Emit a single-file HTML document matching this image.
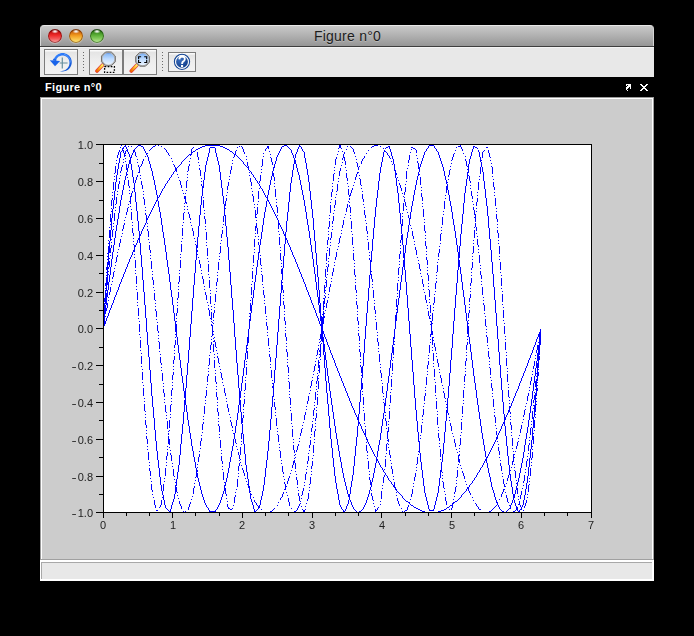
<!DOCTYPE html>
<html><head><meta charset="utf-8">
<style>
*{margin:0;padding:0;box-sizing:border-box}
html,body{width:694px;height:636px;background:#000;overflow:hidden;font-family:"Liberation Sans",sans-serif}
.abs{position:absolute}
#title{left:40px;top:25px;width:614px;height:21px;border-radius:4px 4px 0 0;
 background:linear-gradient(#c9c9c9,#969696);border-top:1px solid #e8e8e8;border-left:1px solid #d4d4d4;border-right:1px solid #d4d4d4}
#title .t{position:absolute;left:1px;right:0;top:2px;text-align:center;font-size:14px;letter-spacing:0.25px;color:#1c1c1c;text-shadow:0 1px 0 rgba(255,255,255,0.25)}
.dot{position:absolute;top:3px;width:14px;height:14px;border-radius:50%}
#tline{left:40px;top:46px;width:614px;height:1px;background:#3e3e3e}
#tool{left:40px;top:47px;width:614px;height:30px;background:#e8e8e8;border-top:1px solid #f4f4f4}
.btn{position:absolute;border:1px solid #7c7c7c;background:linear-gradient(#fafafa 0,#fafafa 1px,#e4e4e4 2px,#eeeeee 45%,#f3f3f3 100%)}
.sep{position:absolute;width:1px}
.sep i{position:absolute;left:0;width:1px;height:1px;background:#6a6a6a}
#dock{left:40px;top:77px;width:614px;height:20px;background:#000}
#dock .t{position:absolute;left:5px;top:4px;font-size:11px;font-weight:bold;letter-spacing:0.3px;color:#fff}
#panel{left:40px;top:97px;width:614px;height:463px;background:#cccccc;border-top:1px solid #9a9a9a;border-left:1px solid #9a9a9a;border-right:1px solid #a0a0a0;border-bottom:1px solid #a0a0a0}
#panel .in{position:absolute;left:0;top:0;right:0;bottom:0;border-top:1px solid #fff;border-left:1px solid #fff;border-right:1px solid #fff}
#sb{left:40px;top:560px;width:614px;height:21px;background:#e8e8e8;border-top:2px solid #fff;border-left:1px solid #fff;border-right:2px solid #fff;border-bottom:2px solid #fff}
#sb .in{position:absolute;left:0;top:0;right:0;bottom:0;border-top:1px solid #a8a8a8;border-left:1px solid #a8a8a8}
.yl{will-change:transform;position:absolute;left:60px;width:33px;text-align:right;font-size:11px;color:#222;line-height:13px}
.mn{display:inline-block;transform:scaleX(1.4);transform-origin:right;margin-right:1px}
.xl{will-change:transform;position:absolute;top:519px;width:20px;text-align:center;font-size:11px;color:#222;line-height:13px}
svg{position:absolute;left:0;top:0}
</style></head><body>
<div id="title" class="abs"><div class="t">Figure n°0</div>
 <div class="dot" style="left:7px;background:radial-gradient(3.5px 2.2px at 50% 17%,#fff 0,rgba(255,255,255,.7) 40%,rgba(255,255,255,0) 100%),linear-gradient(#7a0606 0,#c81414 22%,#ee2a2a 45%,#f25a5a 70%,#ffb0b0 100%);box-shadow:inset 0 0 0 1px rgba(90,0,0,.6),0 1px 1px rgba(255,255,255,.3)"></div>
 <div class="dot" style="left:28px;background:radial-gradient(3.5px 2.2px at 50% 17%,#fff 0,rgba(255,255,255,.7) 40%,rgba(255,255,255,0) 100%),linear-gradient(#7a3000 0,#d06a10 22%,#f0981e 45%,#f8c048 70%,#fff080 100%);box-shadow:inset 0 0 0 1px rgba(100,40,0,.6),0 1px 1px rgba(255,255,255,.3)"></div>
 <div class="dot" style="left:49px;background:radial-gradient(3.5px 2.2px at 50% 17%,#fff 0,rgba(255,255,255,.7) 40%,rgba(255,255,255,0) 100%),linear-gradient(#143c0a 0,#3a8a1e 22%,#5cb038 45%,#88cc60 70%,#c4f0a0 100%);box-shadow:inset 0 0 0 1px rgba(20,60,10,.6),0 1px 1px rgba(255,255,255,.3)"></div>
</div>
<div id="tline" class="abs"></div>
<div id="tool" class="abs">
 <div class="btn" style="left:4px;top:1px;width:34px;height:26px"></div>
 <div class="sep" style="left:43px;top:4px;height:20px"><i style="top:0"></i><i style="top:3px"></i><i style="top:6px"></i><i style="top:9px"></i><i style="top:12px"></i><i style="top:15px"></i><i style="top:18px"></i></div>
 <div class="btn" style="left:49px;top:1px;width:34px;height:26px"></div>
 <div class="btn" style="left:83px;top:1px;width:34px;height:26px"></div>
 <div class="sep" style="left:122px;top:4px;height:20px"><i style="top:0"></i><i style="top:3px"></i><i style="top:6px"></i><i style="top:9px"></i><i style="top:12px"></i><i style="top:15px"></i><i style="top:18px"></i></div>
 <div class="btn" style="left:128px;top:4px;width:28px;height:20px"></div>
</div>
<div id="dock" class="abs"><div class="t">Figure n°0</div></div>
<div id="panel" class="abs"><div class="in"></div></div>
<div id="sb" class="abs"><div class="in"></div></div>
<svg width="694" height="636" viewBox="0 0 694 636">
 <defs>
  <linearGradient id="lens" x1="0" y1="0" x2="0" y2="1"><stop offset="0" stop-color="#3c74e0"/><stop offset=".15" stop-color="#8cbcf8"/><stop offset=".5" stop-color="#c0dcff"/><stop offset="1" stop-color="#eef6ff"/></linearGradient>
  <linearGradient id="handle" x1="1" y1="0" x2="0" y2="1"><stop offset="0" stop-color="#fff060"/><stop offset=".5" stop-color="#ffb020"/><stop offset="1" stop-color="#f06800"/></linearGradient>
  <linearGradient id="arc" x1="0" y1="0" x2="1" y2="1"><stop offset="0" stop-color="#3a88ff"/><stop offset=".6" stop-color="#1a66ee"/><stop offset="1" stop-color="#1450c0"/></linearGradient>
  <radialGradient id="help" cx=".35" cy=".3" r=".8"><stop offset="0" stop-color="#3a6fc0"/><stop offset="1" stop-color="#0e3a88"/></radialGradient>
 </defs>
 <!-- rotate icon -->
 <path d="M53.66 59.87 L54.01 58.83 L54.48 57.84 L55.06 56.91 L55.75 56.06 L56.53 55.29 L57.40 54.63 L58.34 54.07 L59.34 53.63 L60.39 53.31 L61.47 53.11 L62.56 53.05 L63.66 53.12 L64.73 53.31 L65.78 53.64 L66.78 54.08 L67.72 54.64 L68.59 55.31 L69.37 56.08 L70.06 56.93 L70.64 57.86 L71.10 58.85 L71.44 59.89 L71.66 60.97 L71.75 62.06 L71.71 63.15 L71.53 64.23 L71.23 65.29 L70.81 66.30 L70.27 67.25 L69.62 68.13 L68.87 68.93 L68.04 69.64 L67.12 70.24 L66.14 70.72 L65.11 71.09 L64.04 71.33 L62.95 71.44 L61.85 71.42 L60.77 71.28 L59.71 71.00 L59.74 70.90 L60.82 70.99 L61.89 70.95 L62.92 70.79 L63.90 70.52 L64.83 70.14 L65.69 69.66 L66.47 69.11 L67.17 68.47 L67.78 67.78 L68.30 67.03 L68.73 66.25 L69.05 65.44 L69.29 64.61 L69.43 63.77 L69.47 62.93 L69.43 62.11 L69.31 61.30 L69.12 60.51 L68.87 59.74 L68.53 59.01 L68.10 58.32 L67.59 57.69 L67.01 57.12 L66.37 56.63 L65.68 56.21 L64.94 55.88 L64.16 55.64 L63.37 55.50 L62.56 55.45 L61.75 55.50 L60.95 55.64 L60.18 55.88 L59.44 56.20 L58.74 56.62 L58.10 57.11 L57.52 57.67 L57.01 58.30 L56.58 58.99 L56.24 59.72 L55.98 60.49Z" fill="url(#arc)"/>
 <path d="M64 54.4 A7.9 7.9 0 0 1 70.4 62.5" fill="none" stroke="#8cc4ff" stroke-width="0.7" opacity=".7"/>
 <path d="M49.8 60.2 L60.2 61.1 L55 66.2 Z" fill="#1a64ea"/>
 <path d="M52.4 60.4 L53.8 58.4 L56.5 59.8 L56.2 61 Z" fill="#1a64ea"/>
 <path d="M62.3 57.5v11M59.7 63h7.9" stroke="#4f7f8f" stroke-width="1.2" fill="none" opacity=".85"/>
 <!-- zoom icon 1 -->
 <path d="M102.4 65.2 L97 71" stroke="#e01818" stroke-width="3.6" stroke-linecap="round" opacity=".85"/>
 <path d="M102.4 65.2 L97 71" stroke="url(#handle)" stroke-width="2.4" stroke-linecap="round"/>
 <circle cx="108.4" cy="58.9" r="6.6" fill="url(#lens)" stroke="#b4b4b4" stroke-width="1.4"/>
 <path d="M115.33 61.77 L111.27 65.83 L105.53 65.83 L101.47 61.77 L101.47 56.03 L105.53 51.97 L111.27 51.97 L115.33 56.03Z" fill="none" stroke="#5a5a5a" stroke-width="0.8"/>
 <rect x="104.6" y="66.6" width="9.8" height="5.7" fill="none" stroke="#000" stroke-width="1.3" stroke-dasharray="1.6 1.5"/>
 <!-- zoom icon 2 -->
 <path d="M136.7 65.2 L131.3 71" stroke="#e01818" stroke-width="3.6" stroke-linecap="round" opacity=".85"/>
 <path d="M136.7 65.2 L131.3 71" stroke="url(#handle)" stroke-width="2.4" stroke-linecap="round"/>
 <circle cx="142.6" cy="59.3" r="6.6" fill="url(#lens)" stroke="#b4b4b4" stroke-width="1.4"/>
 <path d="M149.53 62.17 L145.47 66.23 L139.73 66.23 L135.67 62.17 L135.67 56.43 L139.73 52.37 L145.47 52.37 L149.53 56.43Z" fill="none" stroke="#5a5a5a" stroke-width="0.8"/>
 <path d="M138.6 59.2v-2.5h2.5M144.2 56.7h2.5v2.5M146.7 60v2.5h-2.5M141.1 62.5h-2.5V60" fill="none" stroke="#000" stroke-width="1.15"/>
 <!-- help icon -->
 <circle cx="182" cy="61.8" r="7.5" fill="none" stroke="#1a4a98" stroke-width="1.3"/>
 <circle cx="182" cy="61.8" r="6.5" fill="none" stroke="#fff" stroke-width="0.9"/>
 <circle cx="182" cy="61.8" r="5.9" fill="url(#help)"/>
 <path d="M179.3 59.4 Q179.4 56.5 182.1 56.5 Q184.9 56.6 184.8 59.2 Q184.7 60.7 183 61.6 Q182.1 62.2 182.1 64" fill="none" stroke="#fff" stroke-width="1.9"/>
 <rect x="181" y="65" width="2.1" height="2.1" fill="#fff"/>
 <!-- dock icons -->
 <path d="M626 84h5v1h-5zM626 85h1v1h-1zM628 85h3v1h-3zM627 86h4v1h-4zM626 87h3v1h-3zM630 87h1v1h-1zM626 88h2v1h-2zM630 88h1v1h-1zM626 89h1v1h-1zM627 90h1v1h-1zM640 84h2v1h-2zM646 84h2v1h-2zM641 85h2v1h-2zM645 85h2v1h-2zM642 86h4v1h-4zM643 87h2v1h-2zM642 88h4v1h-4zM641 89h2v1h-2zM645 89h2v1h-2zM640 90h2v1h-2zM646 90h2v1h-2z" fill="#fff" shape-rendering="crispEdges"/>
 <rect x="103" y="144" width="489" height="369" fill="#fff"/>
 <g fill="none" stroke="#0000ff" stroke-width="1" shape-rendering="crispEdges">
<path d="M103.5 313v16M104.5 298v4M104.5 303v23M105.5 283v3M105.5 288v1M105.5 290v14M105.5 305v9M105.5 316v1M105.5 321v3M106.5 267v3M106.5 272v1M106.5 275v1M106.5 277v14M106.5 293v12M106.5 308v3M106.5 318v3M107.5 253v1M107.5 256v1M107.5 259v1M107.5 262v23M107.5 290v7M107.5 303v5M107.5 316v2M108.5 240v1M108.5 243v1M108.5 246v19M108.5 267v2M108.5 271v1M108.5 274v1M108.5 282v8M108.5 297v1M108.5 300v1M108.5 313v3M109.5 227v1M109.5 230v8M109.5 241v12M109.5 258v1M109.5 261v6M109.5 275v7M109.5 292v3M109.5 310v3M110.5 214v8M110.5 224v1M110.5 230v11M110.5 248v5M110.5 255v1M110.5 267v8M110.5 287v5M110.5 308v2M111.5 200v6M111.5 208v1M111.5 211v1M111.5 218v12M111.5 239v1M111.5 242v1M111.5 245v3M111.5 259v8M111.5 284v1M111.5 305v3M112.5 192v1M112.5 195v1M112.5 198v2M112.5 209v9M112.5 230v7M112.5 252v7M112.5 277v2M112.5 281v1M112.5 303v2M113.5 182v8M113.5 200v9M113.5 223v1M113.5 226v1M113.5 229v1M113.5 245v7M113.5 272v5M113.5 300v3M114.5 173v1M114.5 176v1M114.5 179v1M114.5 191v9M114.5 213v8M114.5 238v7M114.5 268v1M114.5 271v1M114.5 297v3M115.5 166v7M115.5 182v9M115.5 204v1M115.5 207v1M115.5 210v1M115.5 231v7M115.5 262v1M115.5 265v1M115.5 295v2M116.5 160v1M116.5 163v1M116.5 175v7M116.5 197v7M116.5 225v6M116.5 257v5M116.5 292v3M117.5 155v3M117.5 169v6M117.5 191v1M117.5 194v1M117.5 219v6M117.5 252v1M117.5 255v2M117.5 290v2M118.5 152v3M118.5 163v6M118.5 184v5M118.5 213v6M118.5 249v1M118.5 287v3M119.5 150v2M119.5 158v5M119.5 178v1M119.5 181v3M119.5 206v7M119.5 243v4M119.5 284v3M120.5 147v1M120.5 152v6M120.5 171v2M120.5 175v1M120.5 200v6M120.5 239v4M120.5 282v2M121.5 145v1M121.5 151v1M121.5 167v4M121.5 195v5M121.5 236v1M121.5 279v3M122.5 148v3M122.5 165v2M122.5 190v5M122.5 229v2M122.5 233v1M122.5 277v2M123.5 147v2M123.5 150v3M123.5 159v1M123.5 162v1M123.5 185v5M123.5 225v4M123.5 274v3M124.5 146v1M124.5 153v4M124.5 180v5M124.5 220v1M124.5 223v2M124.5 272v2M125.5 145v2M125.5 151v3M125.5 155v1M125.5 158v1M125.5 161v1M125.5 176v4M125.5 217v1M125.5 269v3M126.5 147v2M126.5 150v1M126.5 164v6M126.5 172v4M126.5 212v3M126.5 267v2M127.5 149v3M127.5 168v4M127.5 174v1M127.5 177v1M127.5 208v4M127.5 264v3M128.5 146v1M128.5 152v2M128.5 164v4M128.5 180v6M128.5 204v1M128.5 207v1M128.5 262v2M129.5 154v3M129.5 160v4M129.5 186v2M129.5 190v1M129.5 193v1M129.5 201v1M129.5 259v3M130.5 157v7M130.5 196v8M130.5 206v1M130.5 257v2M131.5 146v1M131.5 155v3M131.5 164v6M131.5 193v4M131.5 209v1M131.5 212v8M131.5 255v2M132.5 153v2M132.5 170v7M132.5 191v2M132.5 222v1M132.5 225v1M132.5 228v5M132.5 252v3M133.5 150v3M133.5 177v6M133.5 188v1M133.5 233v3M133.5 238v1M133.5 241v1M133.5 244v1M133.5 250v2M134.5 149v3M134.5 183v9M134.5 245v7M134.5 254v1M134.5 257v1M135.5 148v1M135.5 152v4M135.5 180v3M135.5 192v10M135.5 245v2M135.5 260v8M135.5 270v1M135.5 273v1M136.5 147v1M136.5 156v1M136.5 177v3M136.5 202v9M136.5 243v2M136.5 276v8M136.5 286v1M136.5 289v1M137.5 146v1M137.5 159v1M137.5 162v1M137.5 175v2M137.5 211v10M137.5 240v3M137.5 292v8M137.5 302v1M137.5 305v1M138.5 145v1M138.5 165v2M138.5 172v1M138.5 221v10M138.5 238v2M138.5 308v8M138.5 318v1M139.5 145v1M139.5 167v6M139.5 231v12M139.5 321v1M139.5 324v8M139.5 334v1M140.5 145v1M140.5 166v1M140.5 175v1M140.5 178v1M140.5 234v2M140.5 243v12M140.5 337v1M140.5 340v8M140.5 350v1M141.5 146v1M141.5 164v2M141.5 181v4M141.5 231v3M141.5 255v12M141.5 353v1M141.5 356v8M141.5 366v1M142.5 146v1M142.5 161v3M142.5 185v4M142.5 229v2M142.5 267v13M142.5 369v1M142.5 372v8M142.5 382v1M143.5 147v2M143.5 159v2M143.5 191v1M143.5 194v1M143.5 197v2M143.5 227v2M143.5 280v12M143.5 385v1M143.5 388v8M144.5 149v2M144.5 199v6M144.5 225v2M144.5 292v13M144.5 398v1M144.5 401v1M144.5 404v7M145.5 151v2M145.5 156v1M145.5 207v1M145.5 210v1M145.5 213v2M145.5 223v2M145.5 305v13M145.5 411v1M145.5 414v1M145.5 417v1M145.5 420v5M146.5 153v2M146.5 215v8M146.5 318v14M146.5 425v3M146.5 430v1M146.5 433v1M146.5 436v3M147.5 153v1M147.5 155v2M147.5 218v2M147.5 223v1M147.5 226v1M147.5 229v2M147.5 332v13M147.5 439v5M147.5 446v1M147.5 449v1M148.5 157v4M148.5 216v2M148.5 231v6M148.5 239v1M148.5 345v12M148.5 452v8M149.5 150v1M149.5 161v3M149.5 214v2M149.5 242v1M149.5 245v5M149.5 357v13M149.5 462v1M149.5 465v1M149.5 468v3M150.5 149v1M150.5 164v4M150.5 212v2M150.5 250v3M150.5 255v1M150.5 258v1M150.5 370v13M150.5 471v5M150.5 478v1M151.5 148v1M151.5 168v3M151.5 210v2M151.5 261v8M151.5 383v13M151.5 481v1M151.5 484v6M152.5 147v1M152.5 171v5M152.5 208v2M152.5 271v1M152.5 274v1M152.5 277v3M152.5 396v11M152.5 490v2M152.5 494v1M153.5 146v1M153.5 176v4M153.5 206v2M153.5 280v5M153.5 287v1M153.5 407v11M153.5 497v1M154.5 146v1M154.5 180v5M154.5 204v2M154.5 290v1M154.5 293v7M154.5 418v12M154.5 500v5M155.5 145v1M155.5 185v5M155.5 202v2M155.5 300v1M155.5 303v1M155.5 306v1M155.5 309v2M155.5 430v11M155.5 505v3M156.5 190v5M156.5 200v2M156.5 311v6M156.5 319v1M156.5 441v10M156.5 510v1M157.5 195v6M157.5 322v1M157.5 325v6M157.5 451v9M157.5 510v1M158.5 145v1M158.5 197v1M158.5 201v6M158.5 331v2M158.5 335v1M158.5 338v1M158.5 341v1M158.5 460v8M159.5 195v2M159.5 207v5M159.5 342v7M159.5 351v1M159.5 468v9M159.5 507v1M160.5 193v2M160.5 212v6M160.5 354v1M160.5 357v6M160.5 477v8M160.5 505v2M161.5 146v1M161.5 191v2M161.5 218v7M161.5 363v2M161.5 367v1M161.5 370v1M161.5 485v6M161.5 500v5M162.5 189v2M162.5 225v7M162.5 373v8M162.5 491v4M162.5 497v1M163.5 188v1M163.5 232v6M163.5 383v1M163.5 386v1M163.5 389v4M163.5 484v7M163.5 495v5M164.5 148v1M164.5 186v2M164.5 238v7M164.5 393v4M164.5 399v1M164.5 402v1M164.5 478v1M164.5 481v1M164.5 500v5M165.5 149v1M165.5 184v2M165.5 245v7M165.5 405v7M165.5 468v8M165.5 505v3M166.5 150v2M166.5 183v1M166.5 252v8M166.5 412v1M166.5 415v1M166.5 418v1M166.5 456v4M166.5 462v1M166.5 465v1M166.5 508v1M167.5 152v1M167.5 181v2M167.5 260v7M167.5 421v8M167.5 446v1M167.5 449v1M167.5 452v4M167.5 509v1M168.5 153v2M168.5 180v1M168.5 267v7M168.5 431v1M168.5 433v2M168.5 436v8M168.5 510v1M169.5 155v1M169.5 178v2M169.5 274v8M169.5 420v8M169.5 430v1M169.5 439v6M169.5 447v1M169.5 511v1M170.5 177v1M170.5 282v8M170.5 405v7M170.5 414v1M170.5 417v1M170.5 450v1M170.5 453v2M170.5 509v3M171.5 158v1M171.5 175v2M171.5 290v7M171.5 390v6M171.5 398v1M171.5 401v1M171.5 404v1M171.5 455v6M171.5 505v4M172.5 161v1M172.5 174v1M172.5 297v8M172.5 375v5M172.5 382v1M172.5 385v1M172.5 388v2M172.5 463v1M172.5 466v1M172.5 502v3M173.5 164v1M173.5 172v2M173.5 305v8M173.5 360v4M173.5 366v1M173.5 369v1M173.5 372v3M173.5 469v7M173.5 499v3M174.5 165v2M174.5 171v1M174.5 313v8M174.5 345v3M174.5 350v1M174.5 353v1M174.5 356v4M174.5 476v1M174.5 479v1M174.5 494v5M175.5 167v4M175.5 321v11M175.5 334v1M175.5 337v1M175.5 340v5M175.5 482v1M175.5 485v9M176.5 168v4M176.5 313v3M176.5 318v1M176.5 321v1M176.5 324v13M176.5 479v7M176.5 487v5M177.5 167v1M177.5 174v1M177.5 298v2M177.5 302v1M177.5 305v1M177.5 308v5M177.5 337v8M177.5 472v7M177.5 492v1M177.5 495v1M178.5 166v1M178.5 177v1M178.5 282v2M178.5 286v1M178.5 289v1M178.5 292v6M178.5 345v8M178.5 465v7M178.5 498v1M179.5 165v1M179.5 180v1M179.5 270v1M179.5 273v1M179.5 276v6M179.5 353v7M179.5 455v10M179.5 501v3M180.5 164v1M180.5 181v4M180.5 254v1M180.5 257v1M180.5 260v8M180.5 360v8M180.5 444v11M180.5 504v2M181.5 162v2M181.5 185v3M181.5 241v1M181.5 244v8M181.5 368v8M181.5 434v10M181.5 506v3M182.5 161v1M182.5 190v1M182.5 225v1M182.5 228v8M182.5 238v1M182.5 376v7M182.5 424v10M183.5 160v1M183.5 193v1M183.5 213v7M183.5 222v1M183.5 383v8M183.5 412v12M183.5 511v1M184.5 159v1M184.5 196v3M184.5 203v1M184.5 206v1M184.5 209v1M184.5 212v1M184.5 391v7M184.5 400v12M185.5 158v1M185.5 193v1M185.5 196v7M185.5 388v17M185.5 511v1M186.5 157v1M186.5 181v7M186.5 190v1M186.5 202v2M186.5 375v13M186.5 405v7M187.5 156v1M187.5 171v1M187.5 174v1M187.5 177v1M187.5 180v1M187.5 206v1M187.5 209v1M187.5 363v12M187.5 412v8M188.5 155v1M188.5 166v5M188.5 212v2M188.5 350v13M188.5 420v6M188.5 507v3M189.5 154v1M189.5 161v1M189.5 164v2M189.5 214v4M189.5 337v13M189.5 426v7M189.5 504v3M190.5 154v2M190.5 158v1M190.5 218v2M190.5 222v1M190.5 324v13M190.5 433v6M190.5 502v2M191.5 149v6M191.5 225v1M191.5 311v13M191.5 439v7M191.5 499v1M192.5 148v1M192.5 152v1M192.5 228v3M192.5 298v13M192.5 446v5M192.5 496v1M193.5 147v1M193.5 151v1M193.5 231v5M193.5 285v13M193.5 451v6M193.5 488v6M194.5 151v1M194.5 238v1M194.5 273v12M194.5 457v5M194.5 483v1M194.5 486v2M195.5 150v1M195.5 241v1M195.5 244v1M195.5 260v13M195.5 462v6M195.5 477v1M195.5 480v1M196.5 149v1M196.5 245v15M196.5 468v9M197.5 149v1M197.5 152v5M197.5 237v11M197.5 250v2M197.5 254v1M197.5 464v1M197.5 467v1M197.5 470v2M197.5 473v5M198.5 148v1M198.5 157v3M198.5 162v1M198.5 226v11M198.5 257v1M198.5 457v5M198.5 478v4M199.5 148v1M199.5 165v1M199.5 168v2M199.5 215v11M199.5 260v4M199.5 451v1M199.5 454v3M199.5 482v4M200.5 147v1M200.5 170v6M200.5 205v10M200.5 264v4M200.5 441v5M200.5 448v1M200.5 486v4M201.5 147v1M201.5 178v1M201.5 181v1M201.5 184v2M201.5 196v9M201.5 270v1M201.5 273v1M201.5 435v1M201.5 438v3M201.5 490v4M202.5 146v1M202.5 186v10M202.5 276v3M202.5 424v6M202.5 432v1M202.5 494v3M203.5 146v1M203.5 180v8M203.5 197v1M203.5 200v8M203.5 279v5M203.5 416v1M203.5 419v1M203.5 422v2M203.5 497v3M204.5 146v1M204.5 172v8M204.5 210v1M204.5 213v1M204.5 216v3M204.5 286v1M204.5 289v1M204.5 406v8M204.5 500v3M205.5 145v1M205.5 165v7M205.5 219v5M205.5 226v1M205.5 229v1M205.5 292v3M205.5 396v2M205.5 400v1M205.5 403v1M205.5 503v2M206.5 145v1M206.5 161v4M206.5 232v8M206.5 242v1M206.5 245v1M206.5 295v5M206.5 387v1M206.5 390v6M206.5 505v2M207.5 145v1M207.5 157v4M207.5 248v8M207.5 258v1M207.5 302v1M207.5 376v6M207.5 384v1M207.5 507v1M208.5 145v1M208.5 153v4M208.5 261v1M208.5 264v8M208.5 274v1M208.5 305v1M208.5 308v2M208.5 365v1M208.5 368v1M208.5 371v1M208.5 374v2M208.5 508v2M209.5 145v1M209.5 148v5M209.5 277v1M209.5 280v8M209.5 310v6M209.5 355v1M209.5 358v7M209.5 510v2M210.5 145v1M210.5 147v1M210.5 290v1M210.5 293v1M210.5 296v8M210.5 318v1M210.5 345v5M210.5 352v1M210.5 511v1M211.5 145v1M211.5 147v1M211.5 306v1M211.5 309v1M211.5 312v8M211.5 321v1M211.5 324v2M211.5 336v1M211.5 339v1M211.5 342v3M211.5 511v1M212.5 145v1M212.5 147v1M212.5 322v1M212.5 325v11M212.5 511v1M213.5 145v1M213.5 147v1M213.5 313v5M213.5 320v1M213.5 323v1M213.5 331v1M213.5 334v1M213.5 338v1M213.5 341v1M213.5 344v8M213.5 511v1M214.5 145v1M214.5 147v1M214.5 304v1M214.5 307v1M214.5 310v3M214.5 337v1M214.5 340v2M214.5 354v1M214.5 357v1M214.5 360v8M214.5 511v1M215.5 145v1M215.5 148v5M215.5 294v8M215.5 342v5M215.5 370v1M215.5 373v1M215.5 376v6M215.5 510v2M216.5 145v1M216.5 153v4M216.5 282v4M216.5 288v1M216.5 291v1M216.5 347v1M216.5 350v1M216.5 382v2M216.5 386v1M216.5 389v1M216.5 392v5M216.5 509v1M217.5 145v1M217.5 157v4M217.5 272v1M217.5 275v1M217.5 278v4M217.5 353v1M217.5 356v2M217.5 397v3M217.5 402v1M217.5 405v1M217.5 408v4M217.5 507v2M218.5 145v1M218.5 161v4M218.5 262v8M218.5 358v5M218.5 412v4M218.5 418v1M218.5 421v1M218.5 424v2M218.5 505v2M219.5 145v1M219.5 165v7M219.5 253v1M219.5 256v1M219.5 259v1M219.5 363v1M219.5 366v1M219.5 426v6M219.5 434v1M219.5 437v1M219.5 503v2M220.5 146v1M220.5 172v8M220.5 243v1M220.5 246v7M220.5 369v1M220.5 372v1M220.5 440v8M220.5 500v3M221.5 146v1M221.5 180v8M221.5 234v4M221.5 240v1M221.5 373v5M221.5 450v1M221.5 453v1M221.5 456v5M221.5 497v3M222.5 146v1M222.5 188v8M222.5 227v1M222.5 230v4M222.5 378v2M222.5 382v1M222.5 461v3M222.5 466v1M222.5 469v1M222.5 494v3M223.5 147v1M223.5 196v8M223.5 216v6M223.5 224v1M223.5 385v1M223.5 472v8M223.5 491v3M224.5 147v1M224.5 204v12M224.5 388v5M224.5 482v1M224.5 485v6M225.5 148v1M225.5 201v5M225.5 208v1M225.5 215v11M225.5 393v3M225.5 482v4M225.5 488v6M226.5 148v1M226.5 195v1M226.5 198v3M226.5 226v11M226.5 398v1M226.5 401v1M226.5 478v4M226.5 494v2M226.5 498v1M227.5 149v1M227.5 186v4M227.5 192v1M227.5 237v10M227.5 404v4M227.5 473v5M227.5 501v1M227.5 504v3M228.5 149v1M228.5 182v4M228.5 247v13M228.5 408v4M228.5 468v5M228.5 507v2M229.5 150v1M229.5 176v1M229.5 179v1M229.5 260v12M229.5 414v1M229.5 462v6M229.5 508v1M230.5 151v1M230.5 170v4M230.5 272v13M230.5 417v1M230.5 420v2M230.5 457v5M230.5 509v1M231.5 151v1M231.5 166v4M231.5 285v13M231.5 422v4M231.5 451v6M231.5 509v1M232.5 152v1M232.5 160v1M232.5 163v1M232.5 298v12M232.5 426v2M232.5 430v1M232.5 446v5M232.5 508v1M233.5 153v1M233.5 157v1M233.5 310v13M233.5 433v1M233.5 439v7M233.5 505v1M234.5 154v3M234.5 323v14M234.5 433v6M234.5 497v6M235.5 151v4M235.5 337v13M235.5 426v7M235.5 439v4M235.5 492v1M235.5 495v2M236.5 150v1M236.5 155v1M236.5 350v13M236.5 420v6M236.5 443v1M236.5 446v1M236.5 489v1M237.5 147v1M237.5 156v1M237.5 363v12M237.5 413v7M237.5 449v1M237.5 479v8M238.5 157v1M238.5 375v13M238.5 405v8M238.5 452v3M238.5 466v5M238.5 473v1M238.5 476v1M239.5 146v1M239.5 158v1M239.5 388v17M239.5 455v4M239.5 460v1M239.5 463v3M240.5 159v1M240.5 391v7M240.5 400v12M240.5 447v8M240.5 459v1M240.5 462v1M241.5 146v1M241.5 160v1M241.5 383v8M241.5 412v12M241.5 433v6M241.5 441v1M241.5 444v1M241.5 465v1M242.5 147v2M242.5 161v1M242.5 376v7M242.5 418v5M242.5 424v10M242.5 468v2M243.5 149v3M243.5 162v2M243.5 368v8M243.5 404v3M243.5 409v1M243.5 412v1M243.5 415v3M243.5 434v10M243.5 470v3M244.5 152v2M244.5 164v1M244.5 360v8M244.5 390v1M244.5 393v1M244.5 396v1M244.5 399v5M244.5 444v10M244.5 473v3M245.5 165v1M245.5 353v7M245.5 377v1M245.5 380v1M245.5 383v7M245.5 454v11M245.5 478v1M246.5 156v1M246.5 159v1M246.5 166v1M246.5 345v8M246.5 361v1M246.5 364v1M246.5 367v8M246.5 465v7M246.5 481v1M247.5 162v4M247.5 167v1M247.5 337v9M247.5 348v1M247.5 351v8M247.5 472v7M247.5 484v1M248.5 166v4M248.5 329v14M248.5 479v9M249.5 170v1M249.5 172v1M249.5 175v1M249.5 313v1M249.5 316v1M249.5 319v10M249.5 486v7M250.5 171v1M250.5 178v4M250.5 300v1M250.5 303v8M250.5 313v8M250.5 491v1M250.5 493v6M251.5 172v2M251.5 182v4M251.5 188v1M251.5 284v1M251.5 287v8M251.5 297v1M251.5 305v8M251.5 494v1M251.5 499v3M252.5 174v1M252.5 191v1M252.5 194v2M252.5 268v1M252.5 271v8M252.5 281v1M252.5 298v7M252.5 502v3M253.5 175v2M253.5 196v6M253.5 255v8M253.5 265v1M253.5 290v8M253.5 497v1M253.5 505v4M254.5 177v1M254.5 204v1M254.5 207v1M254.5 239v8M254.5 249v1M254.5 252v1M254.5 282v8M254.5 500v2M254.5 509v3M255.5 178v2M255.5 210v8M255.5 226v5M255.5 233v1M255.5 236v1M255.5 275v7M255.5 502v1M255.5 511v1M256.5 180v1M256.5 214v1M256.5 217v1M256.5 220v1M256.5 223v5M256.5 267v8M256.5 503v2M256.5 510v1M257.5 181v2M257.5 204v1M257.5 207v7M257.5 228v6M257.5 260v7M257.5 505v1M257.5 509v1M258.5 183v1M258.5 191v8M258.5 201v1M258.5 236v1M258.5 239v1M258.5 242v3M258.5 252v8M258.5 506v3M259.5 181v2M259.5 184v2M259.5 188v1M259.5 245v8M259.5 505v3M260.5 175v6M260.5 186v2M260.5 239v6M260.5 255v1M260.5 258v7M260.5 500v5M261.5 166v1M261.5 169v1M261.5 172v1M261.5 188v1M261.5 232v7M261.5 265v1M261.5 268v1M261.5 271v1M261.5 274v1M261.5 496v4M261.5 509v1M262.5 159v7M262.5 189v2M262.5 225v7M262.5 275v7M262.5 284v1M262.5 491v5M263.5 153v1M263.5 156v1M263.5 191v2M263.5 218v7M263.5 287v1M263.5 290v5M263.5 485v6M264.5 193v2M264.5 212v6M264.5 295v3M264.5 300v1M264.5 303v1M264.5 477v8M264.5 512v1M265.5 149v2M265.5 195v2M265.5 207v5M265.5 306v8M265.5 468v9M266.5 148v1M266.5 197v1M266.5 201v6M266.5 316v1M266.5 319v1M266.5 322v4M266.5 460v8M267.5 146v2M267.5 195v6M267.5 326v4M267.5 332v1M267.5 335v1M267.5 451v9M267.5 512v1M268.5 146v3M268.5 190v5M268.5 200v2M268.5 338v8M268.5 441v10M268.5 512v1M269.5 151v1M269.5 185v5M269.5 202v2M269.5 348v1M269.5 351v1M269.5 354v3M269.5 430v11M269.5 512v1M270.5 154v1M270.5 157v1M270.5 180v5M270.5 204v2M270.5 357v5M270.5 364v1M270.5 367v1M270.5 419v11M270.5 511v1M271.5 158v4M271.5 176v4M271.5 206v2M271.5 370v8M271.5 407v12M271.5 511v1M272.5 162v3M272.5 171v5M272.5 208v2M272.5 380v1M272.5 383v1M272.5 386v2M272.5 396v11M272.5 510v1M273.5 167v4M273.5 173v4M273.5 210v2M273.5 383v14M273.5 509v1M274.5 164v4M274.5 177v4M274.5 183v1M274.5 186v1M274.5 212v2M274.5 370v13M274.5 399v1M274.5 402v5M274.5 508v1M275.5 161v3M275.5 189v8M275.5 214v2M275.5 358v12M275.5 407v3M275.5 412v1M275.5 415v1M276.5 157v4M276.5 199v1M276.5 202v1M276.5 205v2M276.5 216v2M276.5 345v13M276.5 418v8M277.5 155v2M277.5 207v6M277.5 215v1M277.5 218v2M277.5 332v13M277.5 428v1M277.5 431v1M277.5 434v1M277.5 505v1M278.5 153v2M278.5 220v9M278.5 231v1M278.5 319v13M278.5 435v7M278.5 502v1M279.5 151v2M279.5 223v2M279.5 234v1M279.5 237v8M279.5 306v13M279.5 444v1M279.5 447v1M279.5 450v1M280.5 149v2M280.5 225v2M280.5 247v1M280.5 250v1M280.5 253v7M280.5 293v13M280.5 451v7M280.5 498v2M281.5 147v2M281.5 227v2M281.5 260v1M281.5 263v1M281.5 266v1M281.5 269v5M281.5 280v13M281.5 460v1M281.5 463v1M281.5 497v1M282.5 146v1M282.5 229v2M282.5 268v12M282.5 282v1M282.5 285v5M282.5 466v6M282.5 494v3M283.5 146v1M283.5 231v3M283.5 256v12M283.5 290v3M283.5 295v1M283.5 298v1M283.5 301v4M283.5 472v2M283.5 476v1M283.5 492v2M284.5 145v1M284.5 234v2M284.5 244v12M284.5 305v4M284.5 311v1M284.5 314v1M284.5 317v4M284.5 479v1M284.5 482v2M284.5 489v1M285.5 145v1M285.5 232v12M285.5 321v4M285.5 327v1M285.5 330v1M285.5 333v4M285.5 484v6M286.5 145v1M286.5 221v11M286.5 238v2M286.5 337v4M286.5 343v1M286.5 346v1M286.5 349v3M286.5 486v1M286.5 492v1M287.5 146v1M287.5 212v9M287.5 240v3M287.5 352v5M287.5 359v1M287.5 362v1M287.5 365v2M287.5 481v3M287.5 495v1M288.5 147v1M288.5 202v10M288.5 243v2M288.5 367v6M288.5 375v1M288.5 378v1M288.5 381v1M288.5 478v3M288.5 498v4M289.5 148v1M289.5 192v10M289.5 245v2M289.5 382v7M289.5 391v1M289.5 394v1M289.5 397v1M289.5 476v2M289.5 502v4M290.5 149v1M290.5 183v9M290.5 247v3M290.5 398v7M290.5 407v1M290.5 410v1M290.5 473v1M291.5 150v3M291.5 177v6M291.5 250v2M291.5 413v8M291.5 423v1M291.5 470v1M291.5 508v1M292.5 153v2M292.5 170v7M292.5 252v3M292.5 426v1M292.5 429v8M292.5 465v3M293.5 155v3M293.5 164v6M293.5 255v2M293.5 439v1M293.5 442v1M293.5 445v5M293.5 461v4M294.5 158v6M294.5 257v2M294.5 450v3M294.5 455v1M294.5 458v1M294.5 460v3M294.5 511v1M295.5 154v4M295.5 160v4M295.5 259v3M295.5 454v1M295.5 457v1M295.5 463v6M295.5 471v1M295.5 511v1M296.5 152v2M296.5 164v4M296.5 262v2M296.5 450v2M296.5 474v1M296.5 477v3M296.5 510v1M297.5 149v3M297.5 168v4M297.5 264v3M297.5 446v4M297.5 480v5M297.5 487v1M297.5 508v2M298.5 147v2M298.5 172v3M298.5 267v2M298.5 444v2M298.5 490v1M298.5 493v3M298.5 506v2M299.5 145v2M299.5 175v5M299.5 269v3M299.5 438v1M299.5 441v1M299.5 496v5M299.5 504v2M300.5 146v1M300.5 180v5M300.5 272v2M300.5 433v3M300.5 501v1M300.5 503v1M301.5 147v2M301.5 185v5M301.5 274v3M301.5 429v4M301.5 495v1M301.5 498v1M301.5 506v1M302.5 149v2M302.5 190v5M302.5 277v2M302.5 425v1M302.5 428v1M302.5 491v4M302.5 509v1M303.5 151v1M303.5 195v5M303.5 279v3M303.5 422v1M303.5 488v3M303.5 510v2M304.5 152v6M304.5 200v6M304.5 282v2M304.5 415v5M304.5 482v1M304.5 485v1M304.5 510v3M305.5 158v5M305.5 206v6M305.5 284v3M305.5 412v3M305.5 474v6M305.5 506v1M305.5 509v1M306.5 163v6M306.5 212v7M306.5 287v3M306.5 406v1M306.5 409v1M306.5 469v1M306.5 472v2M306.5 503v1M307.5 169v6M307.5 219v6M307.5 290v2M307.5 401v3M307.5 461v3M307.5 466v1M307.5 499v2M308.5 175v7M308.5 225v6M308.5 292v3M308.5 396v5M308.5 453v1M308.5 456v5M308.5 493v6M309.5 182v9M309.5 231v7M309.5 295v2M309.5 393v1M309.5 445v3M309.5 450v1M309.5 484v1M309.5 487v1M309.5 490v1M310.5 191v9M310.5 238v7M310.5 297v3M310.5 386v2M310.5 390v1M310.5 437v1M310.5 440v5M310.5 477v7M311.5 200v9M311.5 245v7M311.5 300v3M311.5 381v5M311.5 428v4M311.5 434v1M311.5 466v3M311.5 471v1M311.5 474v1M312.5 209v9M312.5 252v7M312.5 303v2M312.5 377v1M312.5 380v1M312.5 421v1M312.5 424v4M312.5 458v1M312.5 461v5M313.5 218v12M313.5 259v8M313.5 305v3M313.5 371v1M313.5 374v1M313.5 410v6M313.5 418v1M313.5 445v8M313.5 455v1M314.5 230v11M314.5 267v7M314.5 308v2M314.5 366v5M314.5 402v1M314.5 405v1M314.5 408v2M314.5 431v6M314.5 439v1M314.5 442v1M315.5 241v12M315.5 274v8M315.5 310v3M315.5 361v1M315.5 364v2M315.5 392v8M315.5 418v3M315.5 423v1M315.5 426v1M315.5 429v2M316.5 253v12M316.5 282v8M316.5 313v3M316.5 355v1M316.5 358v1M316.5 381v3M316.5 386v1M316.5 389v1M316.5 407v1M316.5 410v1M316.5 413v5M317.5 265v12M317.5 290v7M317.5 316v2M317.5 350v5M317.5 373v1M317.5 376v5M317.5 391v1M317.5 394v1M317.5 397v8M318.5 277v13M318.5 297v8M318.5 318v3M318.5 345v1M318.5 348v2M318.5 360v8M318.5 370v1M318.5 375v1M318.5 378v1M318.5 381v8M319.5 290v13M319.5 305v8M319.5 321v3M319.5 339v1M319.5 342v1M319.5 350v2M319.5 354v1M319.5 357v1M319.5 362v1M319.5 365v8M320.5 303v18M320.5 324v2M320.5 334v5M320.5 341v1M320.5 344v13M320.5 359v1M321.5 316v25M321.5 343v1M322.5 314v1M322.5 317v25M323.5 298v1M323.5 301v9M323.5 311v13M323.5 331v3M323.5 337v18M324.5 285v8M324.5 295v1M324.5 298v6M324.5 306v1M324.5 313v1M324.5 316v2M324.5 334v3M324.5 344v8M324.5 355v13M325.5 269v8M325.5 279v1M325.5 282v1M325.5 287v1M325.5 290v1M325.5 293v1M325.5 296v2M325.5 310v1M325.5 337v2M325.5 352v8M325.5 368v13M326.5 253v8M326.5 263v1M326.5 266v1M326.5 277v1M326.5 280v7M326.5 303v5M326.5 339v3M326.5 360v8M326.5 381v12M327.5 240v5M327.5 247v1M327.5 250v1M327.5 267v5M327.5 274v1M327.5 300v3M327.5 342v3M327.5 368v8M327.5 393v11M328.5 227v2M328.5 231v1M328.5 234v1M328.5 237v3M328.5 258v1M328.5 261v1M328.5 264v3M328.5 294v1M328.5 297v1M328.5 345v2M328.5 376v7M328.5 404v12M329.5 215v1M329.5 218v1M329.5 221v6M329.5 248v8M329.5 287v5M329.5 347v3M329.5 383v8M329.5 416v12M330.5 202v1M330.5 205v8M330.5 238v2M330.5 242v1M330.5 245v1M330.5 284v3M330.5 350v3M330.5 391v7M330.5 428v11M331.5 192v5M331.5 199v1M331.5 232v6M331.5 278v1M331.5 281v1M331.5 353v2M331.5 398v7M331.5 439v9M332.5 183v1M332.5 186v1M332.5 189v3M332.5 221v3M332.5 226v1M332.5 229v1M332.5 272v4M332.5 355v3M332.5 405v7M332.5 448v10M333.5 174v7M333.5 213v1M333.5 216v5M333.5 268v4M333.5 358v2M333.5 412v7M333.5 458v9M334.5 167v1M334.5 170v1M334.5 173v1M334.5 205v3M334.5 210v1M334.5 262v1M334.5 265v1M334.5 360v3M334.5 419v7M334.5 467v9M335.5 159v6M335.5 197v1M335.5 200v5M335.5 257v3M335.5 363v3M335.5 426v7M335.5 476v7M336.5 157v2M336.5 191v1M336.5 194v1M336.5 252v5M336.5 366v2M336.5 433v6M336.5 483v6M337.5 154v1M337.5 184v7M337.5 249v1M337.5 368v3M337.5 439v6M337.5 489v5M338.5 148v1M338.5 151v1M338.5 178v1M338.5 181v1M338.5 243v1M338.5 246v1M338.5 371v2M338.5 445v6M338.5 494v6M339.5 145v3M339.5 171v5M339.5 238v5M339.5 373v3M339.5 451v6M339.5 500v5M340.5 145v3M340.5 168v3M340.5 236v2M340.5 376v2M340.5 457v5M340.5 505v2M341.5 148v1M341.5 165v1M341.5 230v1M341.5 233v1M341.5 378v3M341.5 462v6M341.5 507v2M342.5 151v1M342.5 158v2M342.5 162v1M342.5 225v3M342.5 381v2M342.5 468v5M342.5 509v1M343.5 154v4M343.5 220v5M343.5 383v3M343.5 473v5M343.5 510v2M344.5 152v2M344.5 157v4M344.5 217v1M344.5 386v2M344.5 478v4M344.5 511v2M345.5 161v4M345.5 167v1M345.5 214v1M345.5 388v3M345.5 482v4M345.5 509v2M346.5 149v1M346.5 170v1M346.5 173v5M346.5 208v4M346.5 391v2M346.5 486v4M346.5 506v3M347.5 146v1M347.5 178v3M347.5 183v1M347.5 204v4M347.5 393v3M347.5 490v4M347.5 504v2M348.5 186v1M348.5 189v6M348.5 201v1M348.5 396v2M348.5 494v3M348.5 500v4M349.5 195v2M349.5 198v2M349.5 202v1M349.5 205v2M349.5 398v3M349.5 494v6M350.5 146v1M350.5 193v3M350.5 207v6M350.5 215v1M350.5 218v1M350.5 401v2M350.5 487v7M350.5 500v2M351.5 147v1M351.5 190v3M351.5 221v8M351.5 231v1M351.5 403v3M351.5 481v6M351.5 502v3M352.5 148v1M352.5 188v2M352.5 234v1M352.5 237v8M352.5 406v2M352.5 475v6M352.5 505v2M353.5 149v3M353.5 185v1M353.5 247v1M353.5 250v1M353.5 253v7M353.5 408v2M353.5 466v9M353.5 507v2M354.5 152v2M354.5 182v1M354.5 260v1M354.5 263v1M354.5 266v1M354.5 269v6M354.5 410v3M354.5 456v10M354.5 509v1M355.5 156v1M355.5 177v3M355.5 275v2M355.5 279v1M355.5 282v1M355.5 285v5M355.5 413v2M355.5 446v10M355.5 510v1M356.5 159v1M356.5 162v1M356.5 174v3M356.5 290v3M356.5 295v1M356.5 298v1M356.5 301v4M356.5 415v2M356.5 437v9M356.5 511v1M357.5 163v4M357.5 172v2M357.5 305v4M357.5 311v1M357.5 314v1M357.5 317v4M357.5 417v3M357.5 426v11M357.5 512v1M358.5 167v3M358.5 172v1M358.5 321v4M358.5 327v1M358.5 330v1M358.5 333v3M358.5 414v12M358.5 512v1M359.5 166v1M359.5 175v1M359.5 178v1M359.5 336v5M359.5 343v1M359.5 346v1M359.5 349v3M359.5 402v12M359.5 422v2M359.5 511v1M360.5 179v6M360.5 352v5M360.5 359v1M360.5 362v1M360.5 365v2M360.5 390v12M360.5 424v2M360.5 511v1M361.5 161v3M361.5 185v1M361.5 188v1M361.5 367v6M361.5 375v1M361.5 378v12M361.5 426v3M361.5 510v1M362.5 159v2M362.5 191v1M362.5 194v5M362.5 366v12M362.5 383v6M362.5 391v1M362.5 394v1M362.5 429v2M362.5 509v1M363.5 158v1M363.5 199v3M363.5 204v1M363.5 353v13M363.5 397v8M363.5 407v1M363.5 410v1M363.5 431v2M363.5 507v2M364.5 156v2M364.5 207v1M364.5 210v5M364.5 339v14M364.5 413v8M364.5 423v1M364.5 433v2M364.5 505v2M365.5 215v3M365.5 220v1M365.5 326v13M365.5 426v1M365.5 429v8M365.5 503v2M366.5 153v1M366.5 223v1M366.5 226v5M366.5 313v13M366.5 437v3M366.5 442v1M366.5 445v6M366.5 500v3M367.5 231v3M367.5 236v1M367.5 239v1M367.5 301v12M367.5 439v3M367.5 451v2M367.5 455v1M367.5 458v1M367.5 497v3M368.5 150v1M368.5 242v8M368.5 288v13M368.5 442v2M368.5 461v8M368.5 494v3M369.5 252v1M369.5 255v1M369.5 258v2M369.5 275v13M369.5 444v2M369.5 471v1M369.5 474v1M369.5 477v3M369.5 490v4M370.5 260v15M370.5 446v2M370.5 480v5M370.5 487v3M371.5 147v1M371.5 251v11M371.5 271v1M371.5 274v5M371.5 448v2M371.5 482v5M371.5 490v1M371.5 493v3M372.5 146v1M372.5 239v12M372.5 279v3M372.5 284v1M372.5 287v1M372.5 450v2M372.5 478v4M372.5 496v4M373.5 146v1M373.5 228v11M373.5 290v8M373.5 452v2M373.5 473v5M373.5 500v1M373.5 503v1M374.5 145v1M374.5 217v11M374.5 300v1M374.5 303v1M374.5 306v4M374.5 454v2M374.5 468v5M374.5 506v1M375.5 145v1M375.5 207v10M375.5 310v4M375.5 316v1M375.5 319v1M375.5 456v1M375.5 463v5M375.5 509v3M376.5 145v1M376.5 198v9M376.5 322v8M376.5 457v6M376.5 510v1M377.5 145v1M377.5 190v8M377.5 332v1M377.5 335v1M377.5 338v4M377.5 451v6M377.5 459v2M377.5 508v2M378.5 181v9M378.5 342v4M378.5 348v1M378.5 351v1M378.5 445v6M378.5 461v2M378.5 507v1M379.5 173v8M379.5 354v8M379.5 440v5M379.5 463v2M380.5 146v1M380.5 167v6M380.5 364v1M380.5 367v1M380.5 370v3M380.5 433v7M380.5 465v2M380.5 501v1M380.5 504v1M381.5 162v5M381.5 373v5M381.5 380v1M381.5 426v7M381.5 467v1M381.5 491v8M382.5 157v5M382.5 383v1M382.5 386v7M382.5 419v7M382.5 468v2M382.5 485v1M382.5 488v1M383.5 148v1M383.5 152v5M383.5 393v1M383.5 396v1M383.5 399v1M383.5 402v1M383.5 413v6M383.5 470v2M383.5 477v6M384.5 150v2M384.5 403v10M384.5 469v1M384.5 472v1M384.5 475v2M385.5 148v1M385.5 151v1M385.5 398v8M385.5 412v1M385.5 415v1M385.5 418v3M385.5 456v1M385.5 459v8M385.5 473v2M386.5 147v1M386.5 152v1M386.5 391v7M386.5 421v5M386.5 428v1M386.5 444v7M386.5 453v1M386.5 475v1M387.5 147v1M387.5 153v2M387.5 383v8M387.5 431v8M387.5 440v1M387.5 443v1M387.5 476v2M388.5 146v1M388.5 155v1M388.5 376v7M388.5 421v1M388.5 424v1M388.5 427v5M388.5 439v3M388.5 444v1M388.5 447v1M388.5 478v2M389.5 146v3M389.5 156v2M389.5 368v8M389.5 405v1M389.5 408v1M389.5 411v8M389.5 450v5M389.5 480v1M390.5 149v3M390.5 158v1M390.5 360v8M390.5 392v1M390.5 395v8M390.5 455v3M390.5 460v1M390.5 481v1M391.5 152v4M391.5 161v1M391.5 353v7M391.5 376v1M391.5 379v8M391.5 389v1M391.5 463v1M391.5 466v3M391.5 482v2M392.5 156v3M392.5 164v1M392.5 345v8M392.5 360v1M392.5 363v8M392.5 373v1M392.5 469v5M392.5 484v1M393.5 159v5M393.5 337v8M393.5 347v8M393.5 357v1M393.5 476v1M393.5 479v1M393.5 485v2M394.5 164v7M394.5 329v10M394.5 341v1M394.5 344v1M394.5 482v6M395.5 170v8M395.5 315v14M395.5 487v3M396.5 173v2M396.5 178v8M396.5 299v8M396.5 309v1M396.5 312v9M396.5 489v2M396.5 492v1M396.5 495v1M397.5 177v1M397.5 186v7M397.5 283v8M397.5 293v1M397.5 296v1M397.5 305v8M397.5 491v1M397.5 498v3M398.5 180v1M398.5 193v10M398.5 268v7M398.5 277v1M398.5 280v1M398.5 298v7M398.5 492v1M398.5 501v3M399.5 183v2M399.5 203v10M399.5 254v5M399.5 261v1M399.5 264v1M399.5 267v1M399.5 290v8M399.5 493v1M399.5 504v2M400.5 185v3M400.5 213v11M400.5 240v3M400.5 245v1M400.5 248v1M400.5 251v3M400.5 282v8M400.5 494v1M401.5 188v3M401.5 224v10M401.5 235v5M401.5 275v7M401.5 495v1M401.5 508v1M402.5 193v1M402.5 213v1M402.5 216v1M402.5 219v7M402.5 234v11M402.5 267v8M402.5 496v2M402.5 511v1M403.5 196v1M403.5 203v8M403.5 245v13M403.5 260v7M403.5 498v1M404.5 192v3M404.5 197v1M404.5 199v3M404.5 253v17M404.5 499v1M404.5 511v1M405.5 184v1M405.5 187v5M405.5 202v4M405.5 245v8M405.5 270v12M405.5 500v1M405.5 510v1M406.5 171v8M406.5 181v1M406.5 206v1M406.5 209v1M406.5 238v7M406.5 282v13M406.5 501v1M406.5 510v1M407.5 168v1M407.5 212v1M407.5 232v6M407.5 295v13M407.5 501v1M407.5 507v3M408.5 160v3M408.5 165v1M408.5 215v3M408.5 225v7M408.5 308v13M408.5 502v1M408.5 505v2M409.5 155v5M409.5 218v7M409.5 321v13M409.5 502v2M410.5 152v1M410.5 212v7M410.5 225v1M410.5 334v13M410.5 499v1M410.5 504v1M411.5 147v1M411.5 149v1M411.5 206v6M411.5 228v1M411.5 347v13M411.5 494v3M411.5 505v1M412.5 147v1M412.5 201v5M412.5 231v5M412.5 360v12M412.5 489v5M412.5 505v1M413.5 148v1M413.5 195v6M413.5 236v3M413.5 372v13M413.5 483v1M413.5 486v1M413.5 506v1M414.5 148v1M414.5 190v5M414.5 241v1M414.5 244v1M414.5 385v13M414.5 477v4M414.5 507v1M415.5 149v1M415.5 185v5M415.5 247v3M415.5 398v12M415.5 473v4M415.5 507v1M416.5 150v3M416.5 155v1M416.5 180v5M416.5 250v5M416.5 410v11M416.5 464v1M416.5 467v1M416.5 470v1M416.5 508v1M417.5 158v1M417.5 161v2M417.5 176v4M417.5 257v1M417.5 421v11M417.5 457v7M417.5 508v1M418.5 163v6M418.5 172v4M418.5 260v1M418.5 263v1M418.5 432v10M418.5 451v1M418.5 454v1M418.5 509v1M419.5 167v5M419.5 174v1M419.5 264v5M419.5 441v12M419.5 509v1M420.5 164v3M420.5 177v8M420.5 269v2M420.5 273v1M420.5 435v1M420.5 438v1M420.5 453v9M420.5 510v1M421.5 161v3M421.5 187v1M421.5 190v1M421.5 193v4M421.5 276v1M421.5 425v8M421.5 462v8M421.5 510v1M422.5 158v3M422.5 197v4M422.5 203v1M422.5 206v1M422.5 279v5M422.5 415v2M422.5 419v1M422.5 422v1M422.5 470v8M422.5 511v1M423.5 155v3M423.5 209v8M423.5 284v3M423.5 289v1M423.5 406v1M423.5 409v6M423.5 478v8M423.5 511v1M424.5 152v3M424.5 219v1M424.5 222v1M424.5 225v6M424.5 292v1M424.5 396v5M424.5 403v1M424.5 486v7M424.5 511v1M425.5 151v1M425.5 231v2M425.5 235v1M425.5 238v1M425.5 241v5M425.5 295v5M425.5 387v1M425.5 390v1M425.5 393v3M425.5 493v4M425.5 512v1M426.5 149v2M426.5 246v3M426.5 251v1M426.5 254v1M426.5 257v3M426.5 300v3M426.5 377v8M426.5 497v4M426.5 512v1M427.5 148v1M427.5 260v5M427.5 267v1M427.5 270v1M427.5 273v2M427.5 305v1M427.5 308v1M427.5 365v4M427.5 371v1M427.5 374v1M427.5 501v4M427.5 512v1M428.5 146v2M428.5 275v6M428.5 283v1M428.5 286v1M428.5 289v1M428.5 311v5M428.5 355v1M428.5 358v1M428.5 361v4M428.5 505v4M428.5 512v1M429.5 145v1M429.5 290v7M429.5 299v1M429.5 302v1M429.5 316v3M429.5 345v8M429.5 509v2M429.5 512v1M430.5 145v1M430.5 305v8M430.5 315v1M430.5 318v1M430.5 321v1M430.5 324v1M430.5 334v3M430.5 339v1M430.5 342v1M430.5 510v1M430.5 512v1M431.5 145v1M431.5 321v14M431.5 510v1M431.5 512v1M432.5 145v1M432.5 313v8M432.5 323v1M432.5 331v4M432.5 337v8M432.5 347v1M432.5 350v1M432.5 510v1M432.5 512v1M433.5 145v1M433.5 303v2M433.5 307v1M433.5 310v1M433.5 337v1M433.5 340v1M433.5 353v8M433.5 363v1M433.5 366v1M433.5 509v2M433.5 512v1M434.5 146v2M434.5 294v1M434.5 297v6M434.5 343v4M434.5 369v8M434.5 379v1M434.5 505v4M434.5 512v1M435.5 148v1M435.5 283v6M435.5 291v1M435.5 347v4M435.5 382v1M435.5 385v8M435.5 395v1M435.5 501v4M435.5 512v1M436.5 149v2M436.5 272v1M436.5 275v1M436.5 278v1M436.5 281v2M436.5 353v1M436.5 356v1M436.5 398v1M436.5 401v8M436.5 497v4M436.5 512v1M437.5 151v1M437.5 262v1M437.5 265v7M437.5 359v4M437.5 411v1M437.5 414v1M437.5 417v8M437.5 493v4M437.5 512v1M438.5 152v3M438.5 253v4M438.5 259v1M438.5 363v4M438.5 427v1M438.5 430v1M438.5 433v5M438.5 486v7M438.5 511v1M439.5 155v3M439.5 246v1M439.5 249v4M439.5 369v1M439.5 372v1M439.5 438v3M439.5 443v1M439.5 446v1M439.5 478v8M439.5 511v1M440.5 158v3M440.5 234v7M440.5 243v1M440.5 375v3M440.5 449v8M440.5 459v1M440.5 470v8M440.5 511v1M441.5 161v3M441.5 227v1M441.5 230v1M441.5 233v1M441.5 378v5M441.5 462v10M441.5 510v1M442.5 164v3M442.5 217v8M442.5 385v1M442.5 454v8M442.5 472v1M442.5 475v1M442.5 478v1M442.5 481v1M442.5 510v1M443.5 167v4M443.5 211v1M443.5 214v1M443.5 388v1M443.5 391v2M443.5 443v11M443.5 482v6M443.5 510v1M444.5 171v5M444.5 201v8M444.5 393v5M444.5 432v11M444.5 488v1M444.5 491v1M444.5 509v1M445.5 176v4M445.5 195v1M445.5 198v1M445.5 398v1M445.5 401v1M445.5 421v11M445.5 494v1M445.5 497v4M445.5 509v1M446.5 180v4M446.5 186v7M446.5 404v1M446.5 407v1M446.5 410v11M446.5 501v4M446.5 508v1M447.5 182v1M447.5 184v6M447.5 398v15M447.5 507v1M448.5 175v2M448.5 179v1M448.5 190v5M448.5 386v12M448.5 413v2M448.5 507v1M449.5 170v5M449.5 195v6M449.5 373v13M449.5 417v1M449.5 420v1M449.5 506v1M449.5 509v1M450.5 166v1M450.5 169v1M450.5 201v5M450.5 360v13M450.5 423v3M450.5 505v1M451.5 160v1M451.5 163v1M451.5 206v6M451.5 348v12M451.5 426v5M451.5 505v1M451.5 508v2M452.5 157v3M452.5 212v7M452.5 334v14M452.5 433v1M452.5 503v5M453.5 154v3M453.5 219v6M453.5 321v13M453.5 436v1M453.5 499v1M453.5 502v2M454.5 153v1M454.5 225v6M454.5 308v13M454.5 439v4M454.5 492v2M454.5 496v1M454.5 502v1M455.5 150v1M455.5 231v7M455.5 295v13M455.5 443v4M455.5 487v5M455.5 501v1M456.5 147v1M456.5 238v7M456.5 283v12M456.5 449v1M456.5 477v1M456.5 480v1M456.5 483v1M456.5 486v1M456.5 501v1M457.5 245v7M457.5 270v13M457.5 452v1M457.5 467v1M457.5 470v7M457.5 500v1M458.5 146v1M458.5 252v18M458.5 455v7M458.5 464v1M458.5 499v1M459.5 146v1M459.5 246v12M459.5 260v7M459.5 445v1M459.5 448v1M459.5 451v1M459.5 454v2M459.5 459v4M459.5 498v1M460.5 145v2M460.5 234v12M460.5 267v7M460.5 435v1M460.5 438v7M460.5 465v1M460.5 497v1M461.5 147v2M461.5 224v10M461.5 274v8M461.5 419v1M461.5 422v8M461.5 432v1M461.5 468v1M461.5 495v2M462.5 149v2M462.5 214v10M462.5 282v8M462.5 406v8M462.5 416v1M462.5 471v2M462.5 494v1M463.5 153v1M463.5 203v11M463.5 290v7M463.5 390v8M463.5 400v1M463.5 403v1M463.5 473v3M463.5 493v1M464.5 193v10M464.5 297v8M464.5 376v6M464.5 384v1M464.5 387v1M464.5 476v3M464.5 492v1M465.5 156v1M465.5 159v2M465.5 186v7M465.5 305v8M465.5 361v5M465.5 368v1M465.5 371v1M465.5 374v2M465.5 481v1M465.5 491v1M466.5 161v5M466.5 179v7M466.5 313v8M466.5 345v5M466.5 352v1M466.5 355v1M466.5 358v3M466.5 484v1M466.5 489v2M467.5 166v1M467.5 169v1M467.5 172v7M467.5 321v13M467.5 336v1M467.5 339v1M467.5 342v3M467.5 487v2M468.5 164v9M468.5 175v1M468.5 313v5M468.5 320v1M468.5 323v1M468.5 326v11M468.5 487v4M469.5 159v5M469.5 176v5M469.5 298v4M469.5 304v1M469.5 307v1M469.5 310v3M469.5 337v7M469.5 485v2M469.5 491v2M470.5 156v3M470.5 181v2M470.5 185v1M470.5 188v1M470.5 283v3M470.5 288v1M470.5 291v1M470.5 294v4M470.5 344v8M470.5 484v1M470.5 493v2M471.5 152v4M471.5 191v5M471.5 268v2M471.5 272v1M471.5 275v1M471.5 278v5M471.5 352v8M471.5 483v1M472.5 149v3M472.5 196v3M472.5 201v1M472.5 253v1M472.5 256v1M472.5 259v1M472.5 262v6M472.5 360v8M472.5 481v2M472.5 497v1M473.5 146v3M473.5 204v1M473.5 207v3M473.5 240v1M473.5 243v1M473.5 246v7M473.5 368v8M473.5 480v1M473.5 500v1M474.5 146v1M474.5 210v5M474.5 217v1M474.5 227v1M474.5 230v8M474.5 376v7M474.5 478v2M475.5 147v1M475.5 214v8M475.5 223v4M475.5 383v7M475.5 477v1M475.5 503v1M476.5 147v1M476.5 202v4M476.5 208v1M476.5 211v1M476.5 227v4M476.5 233v1M476.5 390v8M476.5 475v2M476.5 504v2M477.5 148v1M477.5 192v1M477.5 195v1M477.5 198v4M477.5 236v1M477.5 239v6M477.5 398v7M477.5 473v2M477.5 506v1M478.5 150v2M478.5 182v8M478.5 245v2M478.5 249v1M478.5 252v1M478.5 405v7M478.5 472v1M478.5 507v2M479.5 152v5M479.5 176v1M479.5 179v1M479.5 255v8M479.5 412v7M479.5 470v2M479.5 509v1M480.5 157v5M480.5 167v7M480.5 265v1M480.5 268v1M480.5 271v4M480.5 419v7M480.5 468v2M480.5 509v1M481.5 160v1M481.5 162v5M481.5 275v4M481.5 281v1M481.5 284v1M481.5 426v7M481.5 467v1M482.5 152v6M482.5 167v5M482.5 287v8M482.5 433v6M482.5 465v2M483.5 151v1M483.5 172v9M483.5 297v1M483.5 300v1M483.5 303v2M483.5 439v6M483.5 463v2M483.5 512v1M484.5 150v1M484.5 181v8M484.5 305v6M484.5 313v1M484.5 445v6M484.5 461v2M485.5 189v9M485.5 316v1M485.5 319v7M485.5 451v6M485.5 459v2M486.5 147v1M486.5 198v8M486.5 326v1M486.5 329v1M486.5 332v1M486.5 335v2M486.5 457v6M486.5 512v1M487.5 147v1M487.5 206v10M487.5 337v6M487.5 345v1M487.5 456v2M487.5 463v5M488.5 150v3M488.5 216v12M488.5 348v1M488.5 351v6M488.5 454v2M488.5 468v5M489.5 153v4M489.5 228v11M489.5 357v2M489.5 361v1M489.5 364v1M489.5 367v1M489.5 452v2M489.5 473v4M489.5 511v1M490.5 157v1M490.5 160v1M490.5 239v11M490.5 368v7M490.5 377v1M490.5 450v2M490.5 477v5M490.5 511v1M491.5 163v1M491.5 166v1M491.5 250v12M491.5 380v1M491.5 383v5M491.5 448v2M491.5 482v5M491.5 510v1M492.5 167v7M492.5 176v1M492.5 262v12M492.5 388v3M492.5 393v1M492.5 396v1M492.5 446v2M492.5 487v3M492.5 509v1M493.5 179v1M493.5 182v5M493.5 274v13M493.5 399v8M493.5 444v2M493.5 490v3M493.5 508v1M494.5 187v3M494.5 192v1M494.5 195v1M494.5 287v13M494.5 409v1M494.5 412v1M494.5 415v2M494.5 442v2M494.5 493v4M494.5 507v1M495.5 198v8M495.5 300v13M495.5 417v6M495.5 425v1M495.5 440v2M495.5 497v3M495.5 506v1M496.5 208v1M496.5 211v1M496.5 214v5M496.5 313v13M496.5 428v1M496.5 431v4M496.5 437v3M496.5 500v3M496.5 505v1M497.5 219v3M497.5 224v1M497.5 227v1M497.5 230v3M497.5 326v13M497.5 435v4M497.5 441v1M497.5 502v3M498.5 233v5M498.5 240v1M498.5 243v1M498.5 339v13M498.5 433v2M498.5 444v1M498.5 447v4M498.5 505v2M499.5 246v8M499.5 256v1M499.5 259v1M499.5 352v13M499.5 431v2M499.5 451v4M499.5 457v1M499.5 499v1M499.5 507v2M500.5 262v8M500.5 272v1M500.5 365v13M500.5 429v2M500.5 460v1M500.5 463v3M500.5 509v1M501.5 275v1M501.5 278v8M501.5 288v1M501.5 378v12M501.5 426v3M501.5 466v5M501.5 494v3M501.5 510v1M502.5 291v1M502.5 294v8M502.5 304v1M502.5 390v12M502.5 424v2M502.5 473v1M502.5 476v1M502.5 492v2M502.5 511v1M503.5 307v1M503.5 310v8M503.5 320v1M503.5 402v12M503.5 422v2M503.5 479v5M503.5 489v3M503.5 511v1M504.5 323v1M504.5 326v8M504.5 414v12M504.5 484v3M504.5 489v1M504.5 512v1M505.5 336v1M505.5 339v1M505.5 342v8M505.5 417v3M505.5 426v10M505.5 486v1M505.5 492v1M505.5 512v1M506.5 352v1M506.5 355v1M506.5 358v8M506.5 415v2M506.5 436v10M506.5 483v1M506.5 495v3M506.5 511v1M507.5 368v1M507.5 371v1M507.5 374v8M507.5 413v2M507.5 446v10M507.5 478v3M507.5 498v4M507.5 510v1M508.5 384v1M508.5 387v1M508.5 390v7M508.5 410v3M508.5 456v9M508.5 475v3M508.5 502v1M508.5 509v1M509.5 397v1M509.5 400v1M509.5 403v1M509.5 406v6M509.5 465v10M509.5 505v1M509.5 508v1M510.5 406v2M510.5 412v2M510.5 416v1M510.5 419v1M510.5 422v3M510.5 470v1M510.5 474v7M510.5 505v4M511.5 403v3M511.5 425v5M511.5 432v1M511.5 435v1M511.5 467v1M511.5 481v6M511.5 503v2M512.5 401v2M512.5 438v8M512.5 448v1M512.5 461v4M512.5 487v7M512.5 500v3M513.5 398v3M513.5 451v1M513.5 454v8M513.5 494v6M513.5 511v1M514.5 396v2M514.5 454v1M514.5 457v1M514.5 464v1M514.5 467v1M514.5 470v1M514.5 494v4M514.5 500v3M514.5 511v2M515.5 393v3M515.5 451v1M515.5 471v7M515.5 490v4M515.5 503v3M515.5 510v1M516.5 391v2M516.5 446v3M516.5 480v1M516.5 483v1M516.5 486v4M516.5 506v4M517.5 389v2M517.5 442v4M517.5 482v4M517.5 488v6M517.5 507v4M518.5 386v3M518.5 438v1M518.5 441v1M518.5 478v4M518.5 496v1M518.5 499v1M518.5 504v1M518.5 511v2M519.5 383v3M519.5 435v1M519.5 473v5M519.5 501v4M519.5 510v2M520.5 381v2M520.5 429v4M520.5 468v5M520.5 495v4M520.5 505v2M520.5 509v1M521.5 378v3M521.5 425v4M521.5 463v5M521.5 491v4M521.5 507v3M522.5 376v2M522.5 422v1M522.5 458v5M522.5 488v1M522.5 505v2M523.5 373v3M523.5 415v2M523.5 419v1M523.5 452v6M523.5 481v2M523.5 485v1M523.5 500v5M523.5 510v1M523.5 512v1M524.5 371v2M524.5 410v5M524.5 445v7M524.5 475v6M524.5 495v5M524.5 506v2M525.5 368v3M525.5 406v1M525.5 409v1M525.5 439v6M525.5 469v1M525.5 472v1M525.5 489v6M525.5 503v3M526.5 366v2M526.5 403v1M526.5 433v6M526.5 461v6M526.5 483v6M526.5 500v3M527.5 363v3M527.5 396v5M527.5 427v6M527.5 456v1M527.5 459v2M527.5 476v7M527.5 494v1M527.5 497v1M528.5 360v3M528.5 393v3M528.5 420v7M528.5 445v6M528.5 453v1M528.5 467v9M528.5 485v7M529.5 358v2M529.5 387v1M529.5 390v1M529.5 413v7M529.5 437v1M529.5 440v1M529.5 443v2M529.5 458v9M529.5 478v1M529.5 481v1M529.5 484v1M530.5 355v3M530.5 381v4M530.5 406v7M530.5 428v7M530.5 449v9M530.5 468v8M531.5 353v2M531.5 377v4M531.5 399v7M531.5 421v1M531.5 424v1M531.5 427v1M531.5 440v9M531.5 458v2M531.5 462v1M531.5 465v1M532.5 350v3M532.5 371v1M532.5 374v1M532.5 391v8M532.5 411v8M532.5 428v12M532.5 446v1M532.5 449v1M532.5 452v6M533.5 347v3M533.5 366v3M533.5 383v8M533.5 400v3M533.5 405v1M533.5 408v1M533.5 417v11M533.5 433v1M533.5 436v8M534.5 345v2M534.5 361v5M534.5 376v7M534.5 392v1M534.5 395v5M534.5 405v12M534.5 420v8M534.5 430v1M535.5 342v3M535.5 355v1M535.5 358v1M535.5 368v8M535.5 381v6M535.5 389v1M535.5 393v19M535.5 414v1M535.5 417v1M536.5 339v3M536.5 350v3M536.5 361v7M536.5 373v1M536.5 376v1M536.5 379v17M536.5 398v1M536.5 401v1M536.5 404v1M537.5 337v2M537.5 345v5M537.5 353v8M537.5 363v18M537.5 382v1M537.5 385v1M537.5 388v3M538.5 334v3M538.5 342v1M538.5 345v23M538.5 369v1M538.5 372v4M539.5 332v23M539.5 356v4M540.5 329v16"/>
 </g>
 <rect x="103.5" y="144.5" width="488" height="368" fill="none" stroke="#000" stroke-width="1" shape-rendering="crispEdges"/>
 <g stroke="#000" stroke-width="1" shape-rendering="crispEdges">
<path d="M96 144.5H103M96 181.5H103M96 218.5H103M96 255.5H103M96 292.5H103M96 328.5H103M96 365.5H103M96 402.5H103M96 439.5H103M96 476.5H103M96 512.5H103M99 163.5H103M99 200.5H103M99 236.5H103M99 273.5H103M99 310.5H103M99 347.5H103M99 384.5H103M99 420.5H103M99 457.5H103M99 494.5H103M103.5 512V518M172.5 512V518M242.5 512V518M312.5 512V518M381.5 512V518M451.5 512V518M521.5 512V518M591.5 512V518M126.5 512V516M149.5 512V516M195.5 512V516M219.5 512V516M265.5 512V516M288.5 512V516M335.5 512V516M358.5 512V516M405.5 512V516M428.5 512V516M474.5 512V516M498.5 512V516M544.5 512V516M567.5 512V516"/>
 </g>
</svg>
<div class="yl" style="top:139.0px">1.0</div>
<div class="yl" style="top:176.0px">0.8</div>
<div class="yl" style="top:213.0px">0.6</div>
<div class="yl" style="top:250.0px">0.4</div>
<div class="yl" style="top:287.0px">0.2</div>
<div class="yl" style="top:323.0px">0.0</div>
<div class="yl" style="top:360.0px"><span class="mn">-</span>0.2</div>
<div class="yl" style="top:397.0px"><span class="mn">-</span>0.4</div>
<div class="yl" style="top:434.0px"><span class="mn">-</span>0.6</div>
<div class="yl" style="top:471.0px"><span class="mn">-</span>0.8</div>
<div class="yl" style="top:507.0px"><span class="mn">-</span>1.0</div>
<div class="xl" style="left:93.0px">0</div>
<div class="xl" style="left:162.7px">1</div>
<div class="xl" style="left:232.4px">2</div>
<div class="xl" style="left:302.1px">3</div>
<div class="xl" style="left:371.9px">4</div>
<div class="xl" style="left:441.6px">5</div>
<div class="xl" style="left:511.3px">6</div>
<div class="xl" style="left:581.0px">7</div>
</body></html>
